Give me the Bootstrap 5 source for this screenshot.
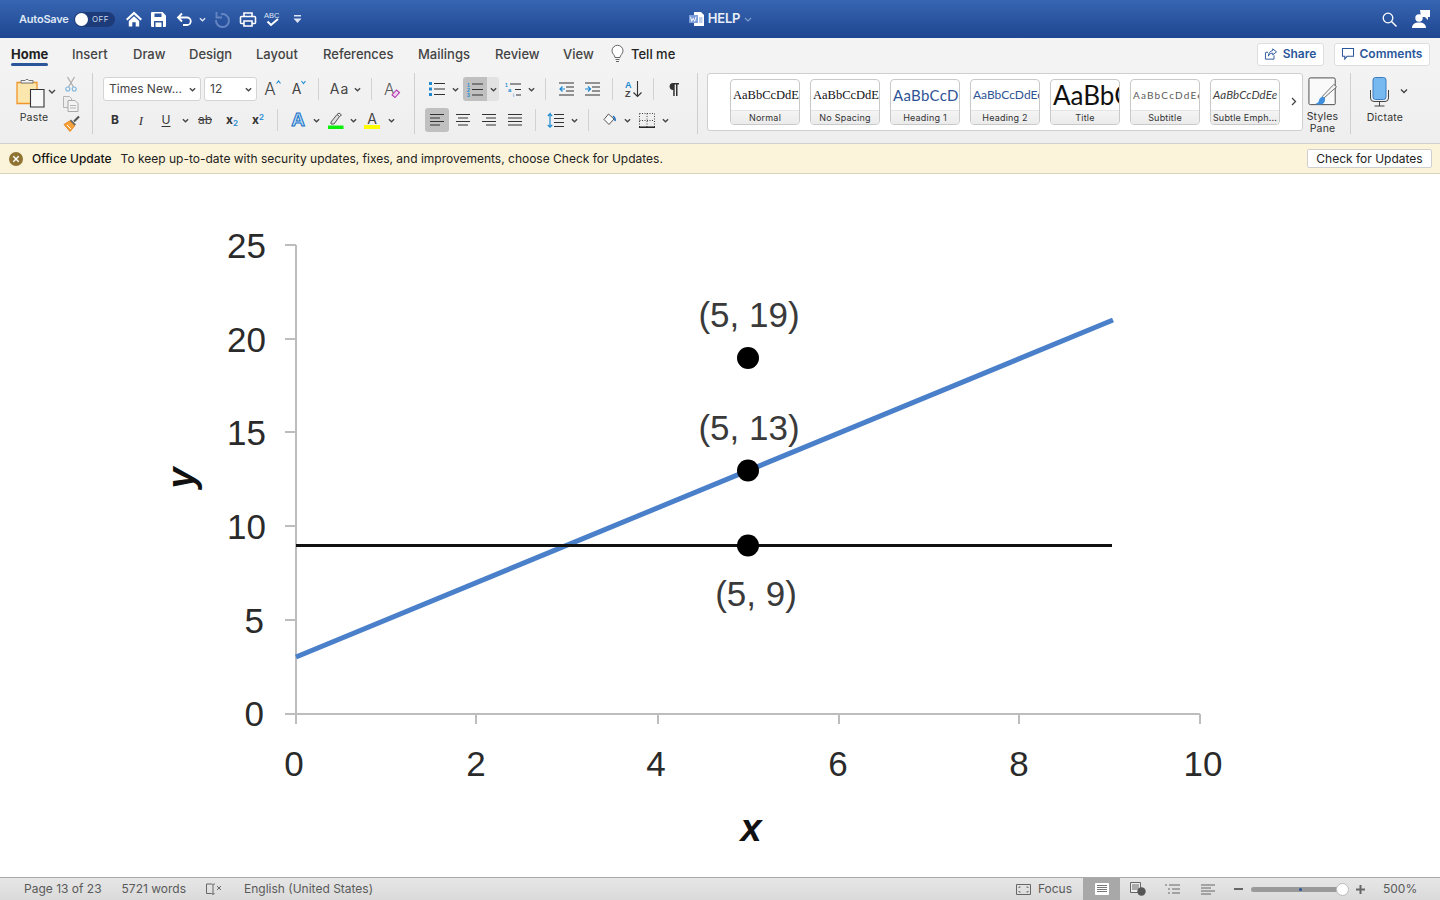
<!DOCTYPE html>
<html lang="en">
<head>
<meta charset="utf-8">
<title>HELP - Word</title>
<link href="https://cdn.jsdelivr.net/npm/bootstrap@5.3.0/dist/css/bootstrap.min.css" rel="stylesheet">
<style>
html,body{height:100%;overflow:hidden}
body{font-family:Inter,"Liberation Sans",sans-serif;font-size:12px;color:#333;background:#fff}
svg{display:block;flex:none;overflow:visible}
.shell{height:900px}
.titlebar{height:38px;background:linear-gradient(#3765b1,#1f4691);color:#fff;flex:none}
.tb-side{flex:1 1 0;min-width:0}
.autosave{margin-left:19px;width:55px;font-size:11px;font-weight:600;color:#dfe7f5;letter-spacing:-.2px}
.switch-pill{width:41px;height:15px;border-radius:8px;background:#1d3b78;color:#cdd8ec;font-size:8px;letter-spacing:.4px;padding:0 1px}
.switch-knob{width:13px;height:13px;border-radius:50%;background:#fff;margin-right:4px}
.qat{display:grid;grid-template-columns:25px 25px 25px 12px 27px 25px 25px 25px;justify-items:center;align-items:center;margin-left:6px}
.doc-name{font-size:13px;font-weight:600;color:#e8eef8;letter-spacing:-.2px;margin-left:11px}
.tb-right{padding-right:10px;gap:15px}
.tabbar{height:32px;background:#f3f3f3;flex:none;padding-left:11px}
.tabgrid{display:grid;grid-template-columns:61px 61px 56px 67px 67px 95px 77px 68px 48px 20px auto;height:32px;align-items:center;flex:1 1 auto}
.tabitem{font-size:13px;color:#444;font-weight:500;line-height:32px;height:32px;text-decoration:none}
.tabitem-on{color:#222;font-weight:700;justify-self:start;position:relative}
.tabitem-on::after{content:"";position:absolute;left:0;right:0;bottom:4px;height:3px;background:#2b579a;border-radius:2px}
.tellme{color:#222;padding-left:0}
.action-btn{height:23px;background:#fff;border:1px solid #dedede;border-radius:3px;color:#2b579a;font-size:12px;font-weight:600;padding:0;display:flex;align-items:center;justify-content:center;gap:6px}
.share-w{width:67px;margin-right:10px}
.comments-w{width:96px;margin-right:10px}
.ribbon{height:73px;background:linear-gradient(#f3f3f3,#eeeeee);flex:none}
.grp{height:61px;margin-top:3px;border-right:1px solid #cfcfcf;flex:none}
.grp-paste{width:93px;display:flex}
.paste-col{width:44px;margin-left:14px;padding-top:4px}
.paste-lbl{font-size:10.5px;color:#333;text-align:center;width:40px;margin-top:3px;line-height:12px;letter-spacing:.2px}
.tool-col{margin-left:4px;width:18px;padding-top:3px;gap:4px}
.grp-font{width:322px;padding-left:10px}
.grp-para{width:283px;padding-left:10px}
.rowgrid{display:grid;height:24px;align-items:center;justify-items:center}
.rowgrid+.rowgrid{margin-top:7px}
.stack-top{padding-top:4px}
.font1{grid-template-columns:98px 3px 53px 31px 22px 16px 27px 8px 20px 22px}
.font2{grid-template-columns:24px 28px 22px 16px 24px 30px 22px 16px 26px 10px 28px 8px 30px 8px}
.para1{grid-template-columns:23px 15px 24px 12px 28px 8px 20px 22px 30px 10px 32px 8px 34px}
.para2{grid-template-columns:24px 28px 24px 28px 12px 29px 8px 20px 24px 10px 29px 8px}
.picker{justify-self:stretch;height:24px;background:#fff;border:1px solid #d4d4d4;border-radius:3px;display:flex;align-items:center;justify-content:space-between;padding:0 4px 0 5px;font-size:12px;color:#444;white-space:nowrap}
.vsep{width:1px;height:22px;background:#d2d2d2}
.cell-on{background:#c0c0c0;border-radius:3px 0 0 3px;justify-self:stretch;height:24px;display:flex;align-items:center;justify-content:center}
.cell-soft{background:#e2e2e2;border-radius:0 3px 3px 0;justify-self:stretch;height:24px;display:flex;align-items:center;justify-content:center}
.cell-full{border-radius:3px}
.fmt{font-size:12px;color:#333;line-height:1}
.fmt-b{font-weight:700}
.fmt-i{font-family:"Liberation Serif",serif;font-style:italic;font-size:13px}
.fmt-u{text-decoration:underline;text-underline-offset:2px}
.fmt-s{text-decoration:line-through;color:#444}
.fmt-aa{font-size:14px;letter-spacing:1px;color:#444;line-height:1}
.fmt-x{font-weight:700;font-size:12px;color:#333}
.fmt-x sub,.fmt-x sup{font-size:8px;color:#1b8ad3;font-weight:600}
.glyph-grow{display:flex;align-items:flex-start;font-size:17px;line-height:18px;color:#444;gap:0;font-weight:300}
.glyph-shrink{display:flex;align-items:flex-start;font-size:14px;line-height:18px;color:#444;font-weight:400}
.glyph-clear{display:flex;align-items:flex-end;font-size:16px;line-height:18px;color:#555;font-weight:300}
.glyph-clear svg{margin-left:-4px}
.glyph-effect{font-family:"Liberation Sans",sans-serif;font-weight:700;font-size:19px;line-height:18px;color:#bcdcf8;-webkit-text-stroke:1px #1570c4}
.glyph-color{display:flex;flex-direction:column;align-items:center;width:16px;font-size:14px;line-height:13px;color:#444}
.colorbar-y{width:16px;height:4px;background:#ffff00}
.gallery{width:596px;height:58px;margin-top:3px;margin-left:9px;background:#fff;border:1px solid #cfcfcf;border-radius:3px;padding:5px 0 0 22px;gap:10px;flex:none}
.sty{width:70px;height:46px;border:1px solid #c9c9c9;border-radius:4px;background:#fff;overflow:hidden;flex:none}
.sty-top{height:30px;padding:0 2px;overflow:hidden;white-space:nowrap;line-height:30px;text-align:center}
.sty-lbl{height:15px;background:linear-gradient(#f4f4f4,#eaeaea);border-top:1px solid #e4e4e4;font-size:9px;line-height:14px;text-align:center;color:#333;letter-spacing:.2px;white-space:nowrap}
.pv-normal{font-family:"Liberation Serif",serif;font-size:12.5px;color:#111}
.pv-h1{font-family:Lato,sans-serif;font-size:15px;color:#2f5496;letter-spacing:.3px}
.pv-h2{font-family:Lato,sans-serif;font-size:12px;color:#2f5496}
.pv-title{font-family:Lato,sans-serif;font-size:26px;color:#111;font-weight:400}
.pv-sub{font-family:Lato,sans-serif;font-size:10px;color:#5a5a5a;letter-spacing:1.2px}
.pv-emph{font-family:Lato,sans-serif;font-size:11.5px;color:#404040;font-style:italic;letter-spacing:.1px}
.gal-more{width:12px;margin-left:1px;margin-top:18px;height:14px;flex:none}
.pane-col{width:48px;flex:none;border-right:1px solid #cfcfcf;height:61px;margin-top:3px;padding:4px 8px 0 0}
.pane-lbl{font-size:10.5px;line-height:12px;color:#333;text-align:center;margin-top:5px;letter-spacing:.2px}
.dict-col{width:68px;flex:none;margin-top:7px}
.dict-lbl{font-size:10.5px;line-height:12px;color:#333;text-align:center;width:68px;margin-top:5px;letter-spacing:.2px}
.notice{height:31px;background:#fcf4da;border-top:1px solid #cfcfcf;border-bottom:1px solid #d8d3bd;flex:none;font-size:12px;color:#222;padding-left:9px;padding-right:8px}
.notice-head{font-weight:500;color:#111;margin-left:9px;margin-right:9px}
.notice-btn{height:19px;width:125px;background:#fff;border:1px solid #cfcfcf;border-radius:2px;font-size:12px;padding:0;line-height:17px;color:#222;margin-left:auto}
.docarea{flex:1 1 auto;min-height:0;background:#fff}
.cht-num{font-family:"Liberation Sans",sans-serif;font-size:35px;fill:#2a2a2a}
.cht-pt{font-family:"Liberation Sans",sans-serif;font-size:35px;fill:#3a3a3a}
.cht-axis{font-family:"Liberation Sans",sans-serif;font-size:38px;font-weight:700;font-style:italic;fill:#111}
.statusbar{height:23px;background:linear-gradient(#e6e6e6,#dadada);border-top:1px solid #a9a9a9;flex:none;font-size:12px;color:#5a5a5a;padding-left:24px}
.st-mr-20{margin-right:20px}
.st-mr-22{margin-right:22px}
.st-focus{margin-left:auto;gap:7px;margin-right:11px}
.view-on{width:37px;height:22px;background:#a8a8a8;display:flex;align-items:center;justify-content:center}
.view-slot{width:35px;height:22px;display:flex;align-items:center;justify-content:center}
.zoom-minus{margin-left:9px}
.zoomer{width:92px;height:5px;border-radius:3px;background:#9a9a9a;margin:0 13px 0 8px;position:relative}
.zoom-tick{position:absolute;left:48px;top:1px;width:3px;height:3px;border-radius:50%;background:#2b579a}
.zoom-knob{position:absolute;right:-6px;top:-4px;width:13px;height:13px;border-radius:50%;background:#fff;border:1px solid #bbb}
.zoom-pct{width:75px;padding-left:18px;white-space:nowrap}
</style>
</head>
<body>
<svg width="0" height="0" class="position-absolute">
  <symbol id="chev" viewBox="0 0 8 5"><path d="M1 1l3 3 3-3" fill="none" stroke="#444" stroke-width="1.5"/></symbol>
  <symbol id="lines-left" viewBox="0 0 16 14"><path d="M1 1.5h14M1 5h10M1 8.500h14M1 12h10" stroke="#333" stroke-width="1.200" fill="none"/></symbol>
  <symbol id="lines-center" viewBox="0 0 16 14"><path d="M1 1.500h14M3 5h10M1 8.500h14M3 12h10" stroke="#333" stroke-width="1.200" fill="none"/></symbol>
  <symbol id="lines-right" viewBox="0 0 16 14"><path d="M1 1.500h14M5 5h10M1 8.500h14M5 12h10" stroke="#333" stroke-width="1.200" fill="none"/></symbol>
  <symbol id="lines-just" viewBox="0 0 16 14"><path d="M1 1.500h14M1 5h14M1 8.500h14M1 12h14" stroke="#333" stroke-width="1.200" fill="none"/></symbol>
</svg>

<div class="shell d-flex flex-column">

  <header class="titlebar d-flex align-items-center">
    <div class="tb-side d-flex align-items-center">
      <span class="autosave">AutoSave</span>
      <span class="switch-pill d-flex align-items-center"><span class="switch-knob"></span>OFF</span>
      <div class="qat">
        <svg width="16" height="16" viewBox="0 0 16 16"><path d="M8 .5L0 8l1.400 1.500L8 3.400l6.600 6.100L16 8zM2.800 10L8 5.200l5.200 4.800v5.500H9.700v-4.300H6.300v4.300H2.800z" fill="#fff"/></svg>
        <svg width="15" height="15" viewBox="0 0 15 15"><path d="M0 1a1 1 0 0 1 1-1h10.500L15 3.500V14a1 1 0 0 1-1 1H1a1 1 0 0 1-1-1z" fill="#fff"/><path d="M3.500 1.500h7v3.500h-7zM3 9h9v6H3z" fill="#2c569f"/><path d="M4.500 10.500h6v4.500h-6z" fill="#fff"/></svg>
        <svg width="16" height="15" viewBox="0 0 16 15"><path d="M6 1.500L2 5.500l4 4M2 5.500h9a3.700 3.700 0 0 1 0 7.500H7" fill="none" stroke="#fff" stroke-width="1.800"/></svg>
        <svg width="7" height="5" viewBox="0 0 8 5"><path d="M1 1l3 3 3-3" fill="none" stroke="#dfe7f5" stroke-width="1.500"/></svg>
        <svg width="16" height="17" viewBox="0 0 16 17"><path d="M7 3.200A6.500 6.500 0 1 1 2 9" fill="none" stroke="#6485c2" stroke-width="1.900"/><path d="M2.500 1v5.500H8" fill="none" stroke="#6485c2" stroke-width="1.900"/></svg>
        <svg width="16" height="15" viewBox="0 0 16 15"><path d="M4 4.500V1h8v3.500M3.500 11.500H1.500a1 1 0 0 1-1-1V5.500a1 1 0 0 1 1-1h13a1 1 0 0 1 1 1v5a1 1 0 0 1-1 1h-2M4 9h8v5H4z" fill="none" stroke="#fff" stroke-width="1.600"/></svg>
        <svg width="17" height="16" viewBox="0 0 17 16"><text x="0" y="6.500" font-size="7.500" font-family="Liberation Sans" fill="#dfe7f5">ABC</text><path d="M3.500 10.500l3.500 3.500 7-6" fill="none" stroke="#fff" stroke-width="2"/></svg>
        <svg width="9" height="8" viewBox="0 0 9 8"><path d="M1 0h7v1.500H1z" fill="#dfe7f5"/><path d="M.5 3.500h8L4.500 8z" fill="#dfe7f5"/></svg>
      </div>
    </div>
    <div class="d-flex align-items-center gap-1 doc-name">
      <svg width="15" height="14" viewBox="0 0 15 14"><path d="M5 0h7l3 3v11H5z" fill="#fff"/><path d="M0 3h9v8H0z" fill="#7d9fdc"/><path d="M10 6h3.500M10 8h3.500M10 10h3.500" stroke="#7d9fdc"/><path d="M1.500 4.800l1.200 4.500 1.500-3 1.500 3 1.300-4.500" fill="none" stroke="#fff" stroke-width=".9"/></svg>
      <span>HELP</span>
      <svg width="8" height="5" viewBox="0 0 8 5"><path d="M1 1l3 3 3-3" fill="none" stroke="#7f9ccf" stroke-width="1.200"/></svg>
    </div>
    <div class="tb-side d-flex align-items-center justify-content-end tb-right">
      <svg width="15" height="15" viewBox="0 0 15 15"><circle cx="6" cy="6" r="4.800" fill="none" stroke="#fff" stroke-width="1.300"/><path d="M9.500 9.500l5 5" stroke="#fff" stroke-width="1.400"/></svg>
      <svg width="18" height="18" viewBox="0 0 18 18"><circle cx="7" cy="8" r="3.700" fill="#fff"/><path d="M0 18c0-3.500 2.500-5.500 7-5.500s7 2 7 5.500z" fill="#fff"/><path d="M8 0h10v7h-2v3l-3-3H9z" fill="#fff"/></svg>
    </div>
  </header>

  <nav class="tabbar d-flex align-items-center">
    <div class="tabgrid">
      <a class="tabitem tabitem-on">Home</a>
      <a class="tabitem">Insert</a>
      <a class="tabitem">Draw</a>
      <a class="tabitem">Design</a>
      <a class="tabitem">Layout</a>
      <a class="tabitem">References</a>
      <a class="tabitem">Mailings</a>
      <a class="tabitem">Review</a>
      <a class="tabitem">View</a>
      <svg width="13" height="18" viewBox="0 0 13 18"><path d="M4 12.500C4 10 1 9 1 5.800A5.400 5.400 0 0 1 12 5.800C12 9 9 10 9 12.500z" fill="#fff" stroke="#666" stroke-width="1"/><path d="M4.500 14.500h4M5 16.500h3" stroke="#666"/></svg>
      <a class="tabitem tellme">Tell me</a>
    </div>
    <button class="action-btn share-w" type="button">
      <svg width="12" height="12" viewBox="0 0 14 13"><path d="M9 .5l4.500 3.500L9 7.500V5.500C6 5.500 4.500 7 4 9 4 5.500 6 3 9 2.500zM1 4.500h2.500M.5 4.500v8h10V8" fill="none" stroke="#2b579a" stroke-width="1.100"/></svg>
      Share
    </button>
    <button class="action-btn comments-w" type="button">
      <svg width="12" height="12" viewBox="0 0 13 13"><path d="M.5.500h12v8.500H5.500L3 12V9H.5z" fill="none" stroke="#2b579a" stroke-width="1.100"/></svg>
      Comments
    </button>
  </nav>

  <section class="ribbon d-flex">
    <div class="grp grp-paste">
      <div class="paste-col">
        <svg width="44" height="32" viewBox="0 0 44 32"><path d="M3 5.500h20v21H3z" fill="#fbe6ae" stroke="#f0962b" stroke-width="1.300"/><path d="M7 6V3.500h4.200a2 2 0 0 1 3.600 0H19V6z" fill="#f4f4f4" stroke="#777" stroke-width="1"/><path d="M16.500 12.500h13.500V30H16.500z" fill="#f8f8f8" stroke="#333" stroke-width="1.100"/><path d="M35 13l3 3 3-3" fill="none" stroke="#444" stroke-width="1.400"/></svg>
        <div class="paste-lbl">Paste</div>
      </div>
      <div class="tool-col d-flex flex-column align-items-center">
        <svg width="12" height="16" viewBox="0 0 12 16"><path d="M2.500 1l6 10M9.500 1l-6 10" stroke="#aaa" stroke-width="1.200"/><circle cx="2.800" cy="13" r="2" fill="none" stroke="#7db5de" stroke-width="1.100"/><circle cx="9.200" cy="13" r="2" fill="none" stroke="#7db5de" stroke-width="1.100"/></svg>
        <svg width="16" height="16" viewBox="0 0 16 16"><path d="M.5.500h6l2 2v9H.5z" fill="#eee" stroke="#b5b5b5"/><path d="M5 4.500h7l3 3v8H5z" fill="#f3f3f3" stroke="#a8a8a8"/><path d="M7 9.500h6M7 12h6" stroke="#b5b5b5"/></svg>
        <svg width="17" height="16" viewBox="0 0 17 16"><path d="M16 .5l-5 5" stroke="#555" stroke-width="2.200"/><path d="M8 3.500l5 5-1.500 1.500-5-5z" fill="#666"/><path d="M6.500 5L1 8.500 7 15.500l4.500-5.500z" fill="#f6a23b" stroke="#e8871e" stroke-width="1"/><path d="M4 9l4 4" stroke="#fff" stroke-width="1"/></svg>
      </div>
    </div>

    <div class="grp grp-font stack-top">
      <div class="rowgrid font1">
        <div class="picker"><span>Times New...</span><svg width="7" height="5"><use href="#chev"/></svg></div>
        <span></span>
        <div class="picker"><span>12</span><svg width="7" height="5"><use href="#chev"/></svg></div>
        <span class="glyph-grow">A<svg width="5" height="4" viewBox="0 0 5 4"><path d="M.5 3.500L2.500 1l2 2.500" fill="none" stroke="#1b8ad3" stroke-width="1.100"/></svg></span>
        <span class="glyph-shrink">A<svg width="5" height="4" viewBox="0 0 5 4"><path d="M.5 1l2 2.500 2-2.500" fill="none" stroke="#1b8ad3" stroke-width="1.100"/></svg></span>
        <span class="vsep"></span>
        <span class="fmt-aa">Aa</span>
        <svg width="7" height="5"><use href="#chev"/></svg>
        <span class="vsep"></span>
        <span class="glyph-clear">A<svg width="9" height="9" viewBox="0 0 9 9"><path d="M1 6l4.500-5 3 2.500-4.500 5z" fill="#f0d3ef" stroke="#b33ab0" stroke-width="1.100"/></svg></span>
      </div>
      <div class="rowgrid font2">
        <span class="fmt fmt-b">B</span>
        <span class="fmt fmt-i">I</span>
        <span class="fmt fmt-u">U</span>
        <svg width="7" height="5"><use href="#chev"/></svg>
        <span class="fmt fmt-s">ab</span>
        <span class="fmt-x">x<sub>2</sub></span>
        <span class="fmt-x">x<sup>2</sup></span>
        <span class="vsep"></span>
        <span class="glyph-effect">A</span>
        <svg width="7" height="5"><use href="#chev"/></svg>
        <svg width="17" height="17" viewBox="0 0 17 17"><path d="M4 10l6-7.500 2.500 2L7 12H4z" fill="#ddd" stroke="#555"/><path d="M10 2.500l2-1.500 2.500 2-2 1.500" fill="none" stroke="#555"/><path d="M1 13.500h15.500V17H1z" fill="#0af00a"/></svg>
        <svg width="7" height="5"><use href="#chev"/></svg>
        <span class="glyph-color">A<span class="colorbar-y"></span></span>
        <svg width="7" height="5"><use href="#chev"/></svg>
      </div>
    </div>

    <div class="grp grp-para stack-top">
      <div class="rowgrid para1">
        <svg width="16" height="14" viewBox="0 0 16 14"><path d="M0 0h3v3H0zM0 5.500h3v3H0zM0 11h3v3H0z" fill="#1b8ad3"/><path d="M5 1.500h11M5 7h11M5 12.500h11" stroke="#333" stroke-width="1.100"/></svg>
        <svg width="7" height="5"><use href="#chev"/></svg>
        <div class="cell-on"><svg width="16" height="15" viewBox="0 0 16 15"><text x="0" y="4.500" font-size="5" font-weight="700" font-family="Liberation Sans" fill="#1b8ad3">1</text><text x="0" y="9.700" font-size="5" font-weight="700" font-family="Liberation Sans" fill="#1b8ad3">2</text><text x="0" y="15" font-size="5" font-weight="700" font-family="Liberation Sans" fill="#1b8ad3">3</text><path d="M5 2h11M5 7.500h11M5 13h11" stroke="#333" stroke-width="1.100"/></svg></div>
        <div class="cell-soft"><svg width="7" height="5"><use href="#chev"/></svg></div>
        <svg width="16" height="15" viewBox="0 0 16 15"><text x="0" y="4.500" font-size="5" font-weight="700" font-family="Liberation Sans" fill="#1b8ad3">1</text><text x="3" y="10" font-size="6" font-weight="700" font-family="Liberation Sans" fill="#1b8ad3">a</text><text x="8" y="15" font-size="5" font-family="Liberation Sans" fill="#1b8ad3">i</text><path d="M5 2h11M10 7.500h6M11 13h5" stroke="#333" stroke-width="1.100"/></svg>
        <svg width="7" height="5"><use href="#chev"/></svg>
        <span class="vsep"></span>
        <svg width="15" height="14" viewBox="0 0 15 14"><path d="M0 1h15M7 5h8M7 9h8M0 13h15" stroke="#333" stroke-width="1.100"/><path d="M6 7H1M3.500 4.500L1 7l2.500 2.500" fill="none" stroke="#1b8ad3" stroke-width="1.200"/></svg>
        <svg width="15" height="14" viewBox="0 0 15 14"><path d="M0 1h15M7 5h8M7 9h8M0 13h15" stroke="#333" stroke-width="1.100"/><path d="M0 7h5M3 4.500L5.500 7 3 9.500" fill="none" stroke="#1b8ad3" stroke-width="1.200"/></svg>
        <span class="vsep"></span>
        <svg width="17" height="18" viewBox="0 0 17 18"><text x="0" y="8" font-size="9" font-weight="700" font-family="Liberation Sans" fill="#1b8ad3">A</text><text x="0" y="17" font-size="9" font-weight="700" font-family="Liberation Sans" fill="#444">Z</text><path d="M12.500 1v15.500M8.500 12.500l4 4 4-4" fill="none" stroke="#333" stroke-width="1.100"/></svg>
        <span class="vsep"></span>
        <svg width="10" height="14" viewBox="0 0 10 14"><path d="M4 1h6v1.500H8.500V14H7V2.500H5.700V14H4.200V8A3.500 3.500 0 0 1 4 1z" fill="#333"/></svg>
      </div>
      <div class="rowgrid para2">
        <div class="cell-on cell-full"><svg width="16" height="14"><use href="#lines-left"/></svg></div>
        <svg width="16" height="14"><use href="#lines-center"/></svg>
        <svg width="16" height="14"><use href="#lines-right"/></svg>
        <svg width="16" height="14"><use href="#lines-just"/></svg>
        <span class="vsep"></span>
        <svg width="17" height="15" viewBox="0 0 17 15"><path d="M3 3.500L3 .8 .8 3M3 .8l2.200 2.200M3 .8v13.400M.8 12L3 14.200 5.200 12" fill="none" stroke="#1b8ad3" stroke-width="1.200"/><path d="M7 1.500h10M7 5.500h10M7 9.500h10M7 13.500h10" stroke="#333" stroke-width="1.100"/></svg>
        <svg width="7" height="5"><use href="#chev"/></svg>
        <span class="vsep"></span>
        <svg width="15" height="15" viewBox="0 0 15 15"><path d="M5.500 1L1 6.500l5 5 5-5.500z" fill="#fafafa" stroke="#555" stroke-width="1"/><path d="M12 8c.5-2-.5-4-2-5" fill="none" stroke="#1b6fc4" stroke-width="1.500"/></svg>
        <svg width="7" height="5"><use href="#chev"/></svg>
        <svg width="16" height="15" viewBox="0 0 16 15"><path d="M.5.500h15M.5 7.500h15M.5.500v14M15.500.500v14M8 .500v14" stroke="#444" stroke-dasharray="1 1.500" fill="none"/><path d="M0 14.200h16" stroke="#111" stroke-width="1.400"/></svg>
        <svg width="7" height="5"><use href="#chev"/></svg>
      </div>
    </div>

    <div class="gallery d-flex">
      <div class="sty"><div class="sty-top pv-normal">AaBbCcDdEe</div><div class="sty-lbl">Normal</div></div>
      <div class="sty"><div class="sty-top pv-normal">AaBbCcDdEe</div><div class="sty-lbl">No Spacing</div></div>
      <div class="sty"><div class="sty-top pv-h1">AaBbCcDd</div><div class="sty-lbl">Heading 1</div></div>
      <div class="sty"><div class="sty-top pv-h2">AaBbCcDdEe</div><div class="sty-lbl">Heading 2</div></div>
      <div class="sty"><div class="sty-top pv-title">AaBbC</div><div class="sty-lbl">Title</div></div>
      <div class="sty"><div class="sty-top pv-sub">AaBbCcDdEe</div><div class="sty-lbl">Subtitle</div></div>
      <div class="sty"><div class="sty-top pv-emph">AaBbCcDdEe</div><div class="sty-lbl">Subtle Emph...</div></div>
      <div class="gal-more"><svg width="6" height="9" viewBox="0 0 6 9"><path d="M1 1l3.500 3.500L1 8" fill="none" stroke="#444" stroke-width="1.300"/></svg></div>
    </div>

    <div class="pane-col d-flex flex-column align-items-center">
      <svg width="30" height="29" viewBox="0 0 32 30"><path d="M2.500.5h25a1.500 1.500 0 0 1 1.500 1.500v26a1 1 0 0 1-1 1H2.500a1.500 1.500 0 0 1-1.500-1.500V2a1.500 1.500 0 0 1 1.500-1.500z" fill="#fafafa" stroke="#444"/><path d="M30.500 10L17 22l-2-1.500L27.500 7.500z" fill="#f5f5f5" stroke="#666"/><path d="M16 20.500c-3 .5-4 2-4.500 4.500-.3 2-3 3-4 3 3.500 1.500 8.500 1.500 10-1.500 1-2 .5-3.500.5-4.500z" fill="#3f8fdc"/></svg>
      <div class="pane-lbl">Styles<br>Pane</div>
    </div>

    <div class="dict-col">
      <div class="d-flex">
        <svg width="66" height="30" viewBox="0 0 66 30"><path d="M24.500.5h8a2.500 2.500 0 0 1 2.500 2.500v17a2.500 2.500 0 0 1-2.500 2.500h-8a2.500 2.500 0 0 1-2.500-2.500V3a2.500 2.500 0 0 1 2.500-2.500z" fill="#76b9f0" stroke="#3d7dbf"/><path d="M19.500 13v8a3.500 3.500 0 0 0 3.500 3.500h11a3.500 3.500 0 0 0 3.500-3.500v-8M28.500 24.500V29M23.500 29h10" fill="none" stroke="#444" stroke-width="1"/><path d="M50 12.500l3 3 3-3" fill="none" stroke="#444" stroke-width="1.400"/></svg>
      </div>
      <div class="dict-lbl">Dictate</div>
    </div>
  </section>

  <aside class="notice d-flex align-items-center">
    <svg width="14" height="14" viewBox="0 0 14 14"><circle cx="7" cy="7" r="7" fill="#8f7433"/><path d="M4.300 4.300l5.400 5.400M9.700 4.300L4.300 9.700" stroke="#fff" stroke-width="1.500"/></svg>
    <span class="notice-head">Office Update</span>
    <span>To keep up-to-date with security updates, fixes, and improvements, choose Check for Updates.</span>
    <button type="button" class="notice-btn">Check for Updates</button>
  </aside>

  <main class="docarea">
    <svg width="1440" height="703" viewBox="0 174 1440 703">
      <g stroke="#bdbdbd" stroke-width="2" fill="none">
        <path d="M296 245v479"/>
        <path d="M285 714h915"/>
        <path d="M285 245h11M285 339h11M285 432h11M285 526h11M285 620h11"/>
        <path d="M476 714v10M658 714v10M839 714v10M1019 714v10M1200 714v10"/>
      </g>
      <g class="cht-num" text-anchor="end">
        <text x="266" y="258">25</text>
        <text x="266" y="352">20</text>
        <text x="266" y="445">15</text>
        <text x="266" y="539">10</text>
        <text x="264" y="633">5</text>
        <text x="264" y="726">0</text>
      </g>
      <g class="cht-num" text-anchor="middle">
        <text x="294" y="776">0</text>
        <text x="476" y="776">2</text>
        <text x="656" y="776">4</text>
        <text x="838" y="776">6</text>
        <text x="1019" y="776">8</text>
        <text x="1203" y="776">10</text>
      </g>
      <path d="M296 657L1113 320" stroke="#4a7fca" stroke-width="5" fill="none"/>
      <path d="M296 545.500H1112" stroke="#111" stroke-width="3" fill="none"/>
      <circle cx="748" cy="358" r="11" fill="#000"/>
      <circle cx="748" cy="470.500" r="11" fill="#000"/>
      <circle cx="748" cy="545.500" r="11" fill="#000"/>
      <g class="cht-pt" text-anchor="middle">
        <text x="749" y="327">(5, 19)</text>
        <text x="749" y="440">(5, 13)</text>
        <text x="756" y="606">(5, 9)</text>
      </g>
      <text class="cht-axis" x="751" y="841" text-anchor="middle">x</text>
      <text class="cht-axis" text-anchor="middle" transform="translate(194 478) rotate(-90)">y</text>
    </svg>
  </main>

  <footer class="statusbar d-flex align-items-center">
    <span class="st-mr-20">Page 13 of 23</span>
    <span class="st-mr-20">5721 words</span>
    <svg class="st-mr-22" width="16" height="13" viewBox="0 0 16 13"><path d="M.5 1h5c1 0 1.500.5 1.500 1v9.500C7 11 6.500 10.500 5.500 10.500h-5zM7 2c0-.5.5-1 1.500-1H9M7 11.500c0-.5.5-1 1.500-1" fill="none" stroke="#666"/><path d="M11 3l4 4M15 3l-4 4" stroke="#666"/></svg>
    <span>English (United States)</span>
    <div class="st-focus d-flex align-items-center">
      <svg width="15" height="11" viewBox="0 0 15 11"><path d="M.5.500h14v10H.5z" fill="none" stroke="#666"/><path d="M3 4V3h1.500M10.500 3H12v1M12 7v1h-1.500M4.500 8H3V7" fill="none" stroke="#666"/></svg>
      <span>Focus</span>
    </div>
    <div class="view-on"><svg width="14" height="12" viewBox="0 0 14 12"><path d="M.5.500h13v11H.5z" fill="#fff" stroke="#fff"/><path d="M2 2.500h10M2 4.500h10M2 6.500h10M2 8.500h10" stroke="#777"/></svg></div>
    <div class="view-slot"><svg width="16" height="14" viewBox="0 0 16 14"><path d="M.5.500h10v10H.5z" fill="#eee" stroke="#666"/><path d="M2 3h7M2 5h7M2 7h7" stroke="#666"/><circle cx="11.500" cy="9.500" r="4.200" fill="#555"/></svg></div>
    <div class="view-slot"><svg width="15" height="11" viewBox="0 0 15 11"><path d="M0 1h2M4 1h11M3 5h2M7 5h8M3 9h2M7 9h8" stroke="#666"/></svg></div>
    <div class="view-slot"><svg width="14" height="11" viewBox="0 0 14 11"><path d="M0 1h14M0 4h10M0 7h14M0 10h10" stroke="#666"/></svg></div>
    <svg class="zoom-minus" width="9" height="2" viewBox="0 0 9 2"><path d="M0 0h9v2H0z" fill="#666"/></svg>
    <div class="zoomer"><span class="zoom-tick"></span><span class="zoom-knob"></span></div>
    <svg width="9" height="9" viewBox="0 0 9 9"><path d="M3.500 0h2v3.500H9v2H5.500V9h-2V5.500H0v-2h3.500z" fill="#666"/></svg>
    <span class="zoom-pct">500%</span>
  </footer>
</div>
<script src="https://cdn.jsdelivr.net/npm/bootstrap@5.3.0/dist/js/bootstrap.bundle.min.js"></script>
</body>
</html>
